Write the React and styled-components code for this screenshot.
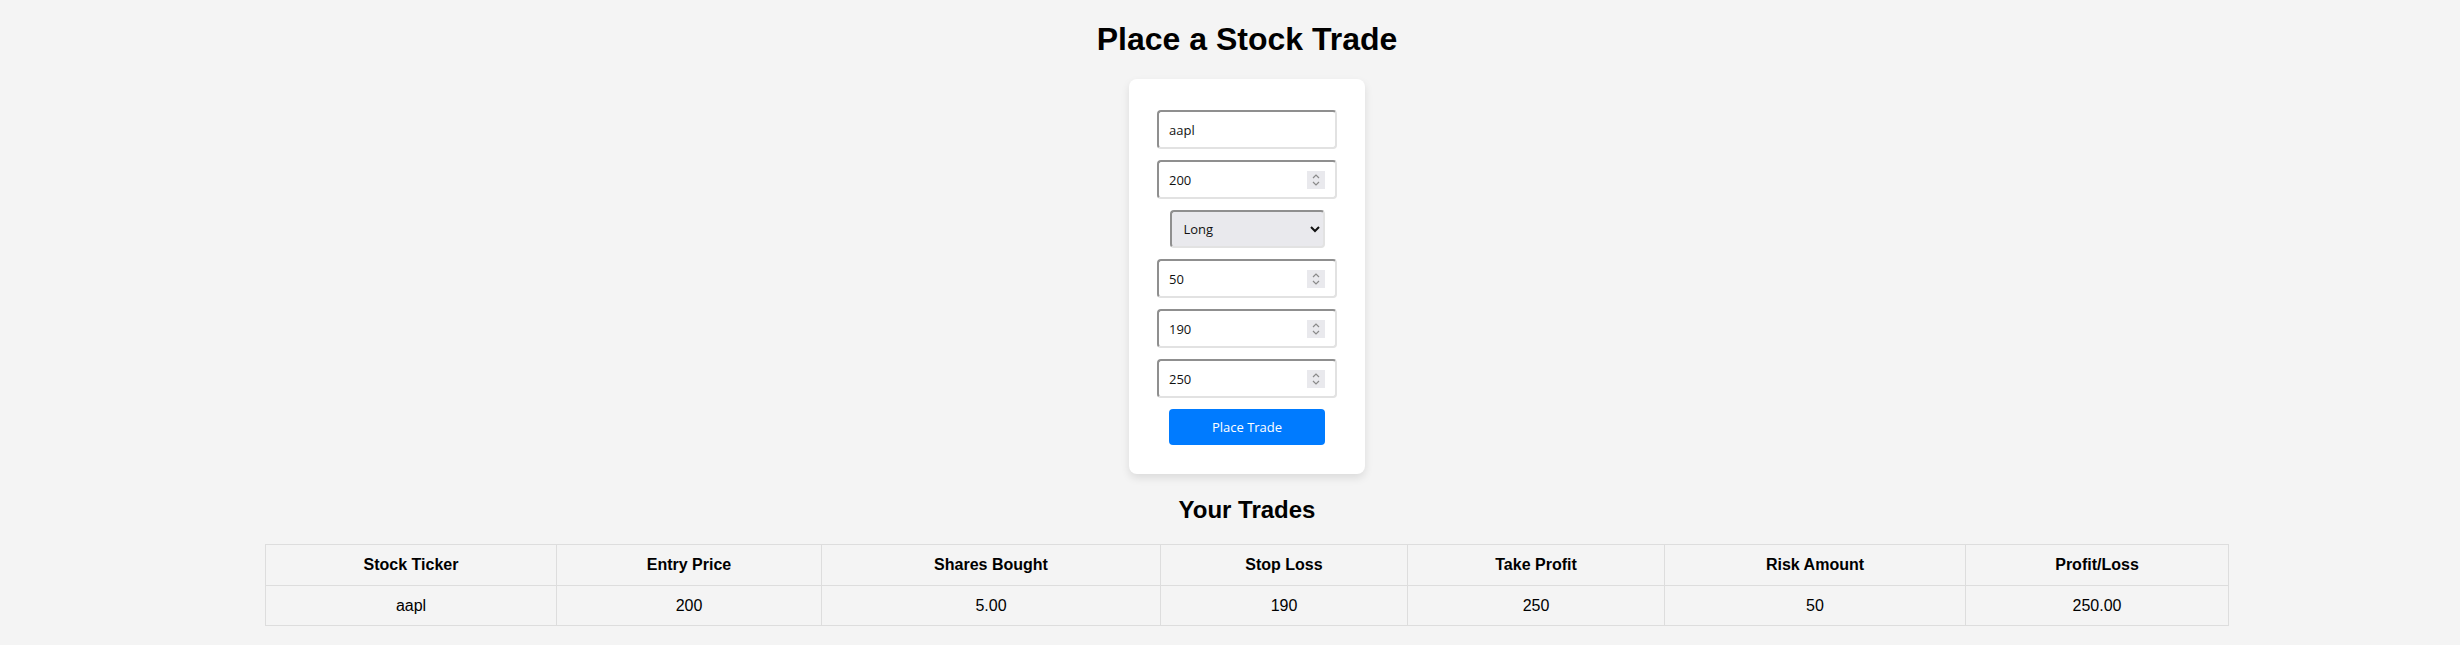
import styled, { createGlobalStyle } from 'styled-components';

const GlobalStyle = createGlobalStyle`
  html, body {
    margin: 0;
    padding: 0;
    background: #f4f4f4;
    font-family: 'Liberation Sans', Arial, sans-serif;
    color: #000;
  }
`;

const Page = styled.div`
  display: flex;
  flex-direction: column;
  align-items: center;
  padding: 21px 0 0 34px;
`;

const Title = styled.h1`
  margin: 0 0 21px;
  font-size: 32px;
  font-weight: bold;
  line-height: 37px;
`;

const Card = styled.form`
  width: 236px;
  box-sizing: border-box;
  padding: 31px 0 29px;
  background: #fff;
  border-radius: 8px;
  box-shadow: 0 4px 8px rgba(0, 0, 0, 0.1);
  display: flex;
  flex-direction: column;
  align-items: center;
  gap: 11px;
`;

const FieldWrap = styled.div`
  position: relative;
  width: 180px;
  height: 39px;
`;

const Field = styled.input`
  width: 100%;
  height: 100%;
  box-sizing: border-box;
  padding: 0 10px;
  border: 2px solid;
  border-color: #8f8f8f #e2e2e2 #e2e2e2 #8f8f8f;
  border-radius: 4px;
  background: #fff;
  font-family: 'Open Sans', 'Noto Sans', sans-serif;
  font-size: 13px;
  color: #111;
  outline: none;
  -moz-appearance: textfield;

  &::-webkit-inner-spin-button,
  &::-webkit-outer-spin-button {
    -webkit-appearance: none;
    margin: 0;
  }
`;

const Spinner = styled.span`
  position: absolute;
  top: 11px;
  right: 12px;
  width: 18px;
  height: 18px;
  background: #e9e9ed;
  display: flex;
  align-items: center;
  justify-content: center;
  pointer-events: none;
`;

const Select = styled.select`
  width: 155px;
  height: 38px;
  box-sizing: border-box;
  padding: 0 8px;
  border: 2px solid;
  border-color: #8f8f8f #e2e2e2 #e2e2e2 #8f8f8f;
  border-radius: 4px;
  background: #e9e9ed;
  font-family: 'Open Sans', 'Noto Sans', sans-serif;
  font-size: 13px;
  color: #111;
`;

const Button = styled.button`
  width: 156px;
  height: 36px;
  border: none;
  border-radius: 4px;
  background: #007bff;
  color: #fff;
  font-family: 'Open Sans', 'Noto Sans', sans-serif;
  font-size: 13px;
  cursor: pointer;
`;

const Subtitle = styled.h2`
  margin: 22px 0 20px;
  font-size: 24px;
  font-weight: bold;
  line-height: 28px;
`;

const Table = styled.table`
  width: 1963px;
  table-layout: fixed;
  border-collapse: collapse;
  font-size: 16px;
`;

const Cell = styled.td`
  border: 1px solid #ddd;
  padding: 0 12px;
  height: ${p => (p.head ? 40 : 39)}px;
  text-align: center;
  font-weight: ${p => (p.head ? 'bold' : 'normal')};
`;

const columns = [
  ['Stock Ticker', 'aapl', 291],
  ['Entry Price', '200', 265],
  ['Shares Bought', '5.00', 339],
  ['Stop Loss', '190', 247],
  ['Take Profit', '250', 257],
  ['Risk Amount', '50', 301],
  ['Profit/Loss', '250.00', 263],
];

const SpinIcon = () => (
  <svg width='10' height='14' viewBox='0 0 10 14' fill='none' stroke='#8a8a8a' strokeWidth='1.2'>
    <path d='M2 5 L5 2 L8 5' />
    <path d='M2 9 L5 12 L8 9' />
  </svg>
);

const NumberField = ({ value }) => (
  <FieldWrap>
    <Field type='number' defaultValue={value} />
    <Spinner>
      <SpinIcon />
    </Spinner>
  </FieldWrap>
);

const App = () => {
  return (
    <Page>
      <GlobalStyle />
      <Title>Place a Stock Trade</Title>
      <Card onSubmit={e => e.preventDefault()}>
        <FieldWrap>
          <Field type='text' defaultValue='aapl' />
        </FieldWrap>
        <NumberField value='200' />
        <Select defaultValue='long'>
          <option value='long'>Long</option>
          <option value='short'>Short</option>
        </Select>
        <NumberField value='50' />
        <NumberField value='190' />
        <NumberField value='250' />
        <Button type='submit'>Place Trade</Button>
      </Card>
      <Subtitle>Your Trades</Subtitle>
      <Table>
        <colgroup>
          {columns.map(([h, , w]) => (
            <col key={h} style={{ width: w }} />
          ))}
        </colgroup>
        <thead>
          <tr>
            {columns.map(([h]) => (
              <Cell as='th' head key={h}>
                {h}
              </Cell>
            ))}
          </tr>
        </thead>
        <tbody>
          <tr>
            {columns.map(([h, v]) => (
              <Cell key={h}>{v}</Cell>
            ))}
          </tr>
        </tbody>
      </Table>
    </Page>
  );
};

export default App;
